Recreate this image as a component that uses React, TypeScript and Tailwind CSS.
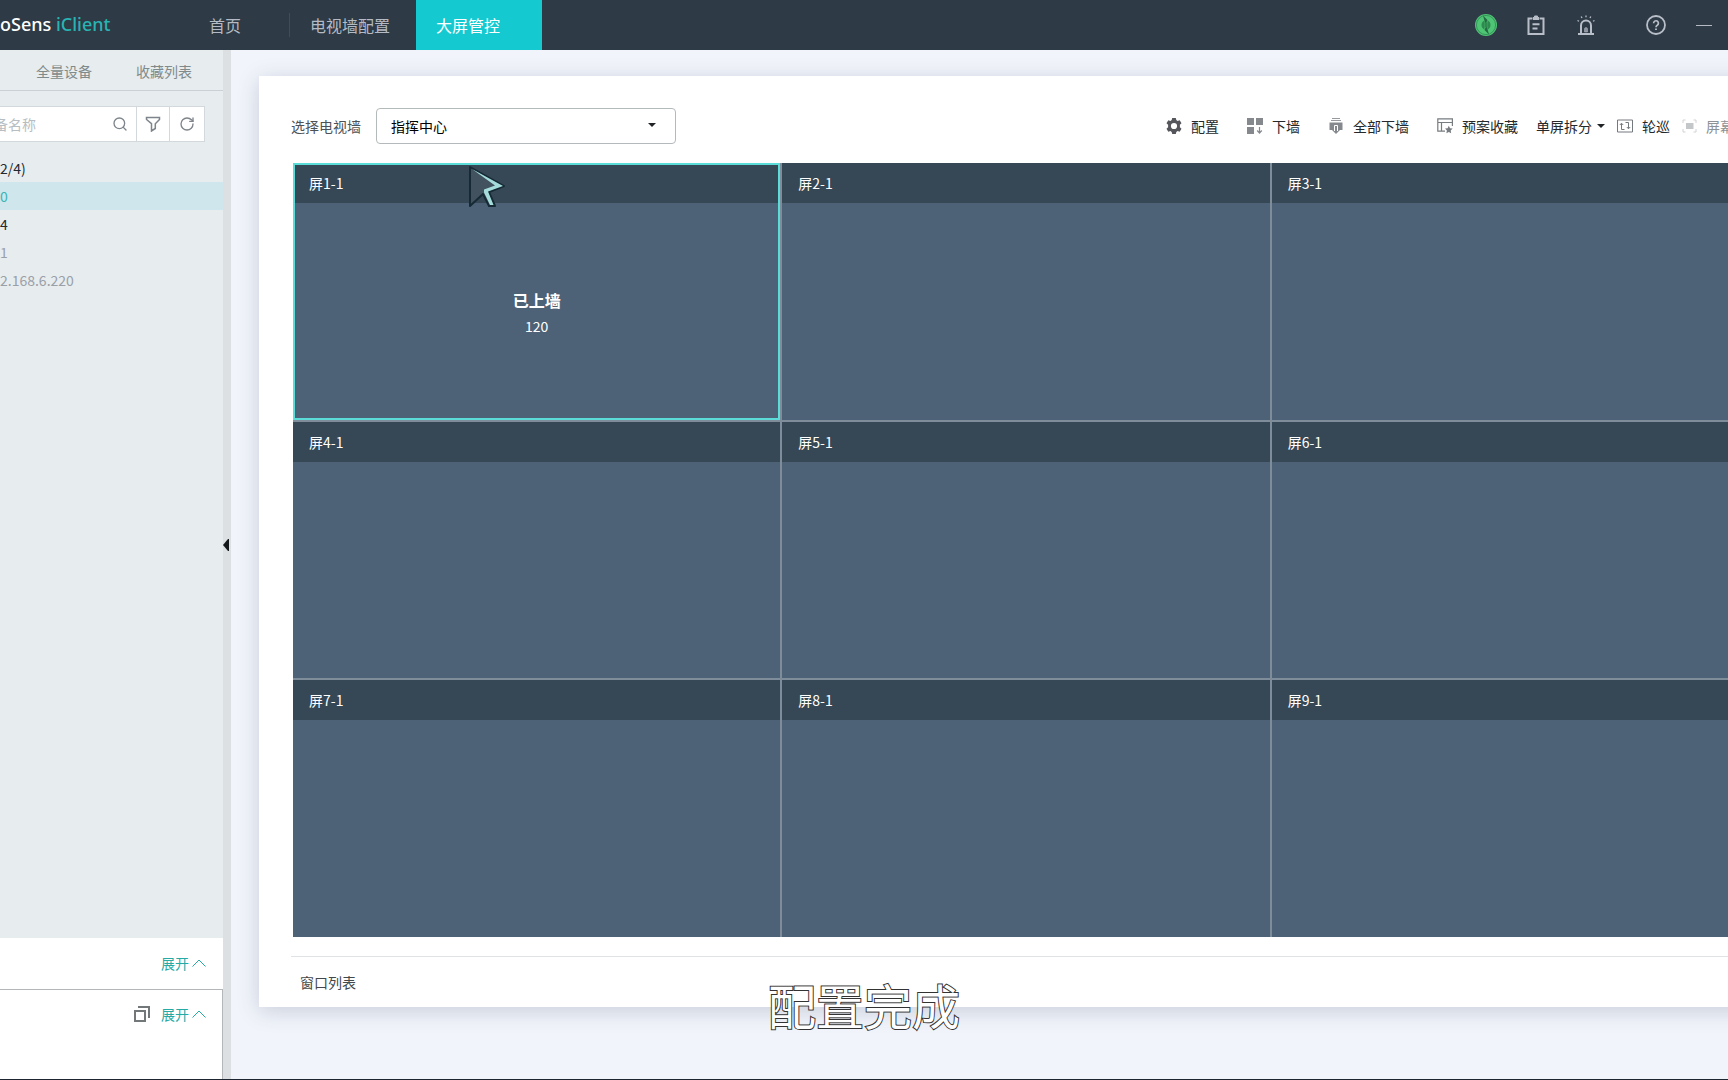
import { useState } from 'react';
import { Search, RotateCw } from 'lucide-react';

const screens = ['屏1-1', '屏2-1', '屏3-1', '屏4-1', '屏5-1', '屏6-1', '屏7-1', '屏8-1', '屏9-1'];

const devices = [
  { name: '2/4)', style: 'text-[#23292f]' },
  { name: '0', style: 'bg-[#cfe6ec] text-[#3bb5b5]' },
  { name: '4', style: 'text-[#23292f]' },
  { name: '1', style: 'text-[#9aa0a8]' },
  { name: '2.168.6.220', style: 'text-[#9aa0a8]' },
];

function SyncIcon() {
  return (
    <svg width="22" height="22" viewBox="0 0 22 22" fill="none">
      <circle cx="11" cy="11" r="11" fill="#4fc475" />
      <circle cx="11" cy="11" r="9.6" stroke="#2f8a52" strokeWidth="0.8" />
      <path d="M8 1.500l4.500 4.500-2 4.500zM14 20.500L9.500 16l2-4.500z" fill="#256a42" />
      <path d="M9.500 6.500C7.500 7 6.500 9 6.500 11s1 4 3 4.500zM12.500 6.500c2 .5 3 2.500 3 4.500s-1 4-3 4.500z" fill="#2f8a50" />
      <path d="M9.500 8.500h3v5h-3z" fill="#2f8a50" />
    </svg>
  );
}

function ClipboardIcon() {
  return (
    <svg width="18" height="20" viewBox="0 0 18 20" fill="none" stroke="#b9bfc9" strokeWidth="2">
      <path d="M5 3.500H1.500V19H16.500V3.500H13" />
      <path d="M6 4.500V2.500h1.500V1h3v1.500H12v2z" fill="#b9bfc9" strokeWidth="1" />
      <path d="M5.500 9.200h7M5.500 13.500h5" />
    </svg>
  );
}

function AlarmIcon() {
  return (
    <svg width="18" height="20" viewBox="0 0 18 20" fill="none" stroke="#b9bfc9" strokeWidth="2">
      <path d="M1 19h16M4 18.500V10.500a5 5 0 0 1 10 0v8" />
      <path d="M7.500 17v-3a1.500 1.500 0 0 1 3 0v3z" fill="#8b939e" strokeWidth="0.5" />
      <path d="M9 .5v1.800M4.200 1.500l.8 1.500M13.800 1.500l-.8 1.500M.5 5.500l1.500.8M17.500 5.500l-1.500.8" strokeWidth="1.300" />
    </svg>
  );
}

function HelpIcon() {
  return (
    <svg width="20" height="20" viewBox="0 0 20 20" fill="none" stroke="#b9bfc9">
      <circle cx="10" cy="10" r="9" strokeWidth="1.800" />
      <path d="M7.600 8.200a2.400 2.400 0 1 1 3.700 2c-.9.600-1.300.9-1.300 2" strokeWidth="1.700" />
      <path d="M10 13.400v1.700" strokeWidth="1.800" />
    </svg>
  );
}

function FilterIcon() {
  return (
    <svg width="16" height="16" viewBox="0 0 16 16" fill="none" stroke="#7d848b" strokeWidth="1.500">
      <path d="M1.500 1.500h13v2l-4.200 4.200v4.800l-3.800 2.500V7.700L1.500 3.500z" />
    </svg>
  );
}

function GearIcon() {
  return (
    <svg width="16" height="16" viewBox="0 0 16 16" fill="#55565b">
      <path
        fillRule="evenodd"
        d="M6.200 0h3.600l.5 2.100 1.300.8 2.100-.7 1.800 3.100-1.600 1.500v2.400l1.600 1.500-1.800 3.100-2.100-.7-1.300.8-.5 2.100H6.200l-.5-2.100-1.300-.8-2.100.7L.5 10.700l1.600-1.500V6.800L.5 5.300l1.800-3.100 2.100.7 1.300-.8zM8 4.900a3.100 3.100 0 1 0 0 6.200 3.100 3.100 0 0 0 0-6.200z"
      />
    </svg>
  );
}

function DownWallIcon() {
  return (
    <svg width="16" height="16" viewBox="0 0 16 16" fill="#85898d">
      <path d="M0 0h7v7H0zM9 0h7v7H9zM0 9h7v7H0z" />
      <path d="M12.500 9v5.800M10.200 12.500l2.300 2.500 2.300-2.500" fill="none" stroke="#85898d" strokeWidth="1.200" />
    </svg>
  );
}

function AllDownIcon() {
  return (
    <svg width="16" height="16" viewBox="0 0 16 16" fill="none">
      <path d="M4 .5h8M3 2.500h10" stroke="#96999d" />
      <path d="M1.500 4.500h13v7.500H12L8 16l-4-4H1.500z" fill="#85898d" />
      <path d="M6.500 13V7.500h3V13" stroke="#fff" />
    </svg>
  );
}

function PlanIcon() {
  return (
    <svg width="16" height="16" viewBox="0 0 16 16" fill="none" stroke="#777c80" strokeWidth="1.200">
      <path d="M15.400 8V.8H.8v12.400H8M.8 4.500h14.600M4.500 4.500v8.700" />
      <path d="M11.800 7.800l1.200 2.400 2.600.4-1.900 1.900.5 2.700-2.400-1.200-2.400 1.200.5-2.700L8 10.600l2.600-.4z" fill="#777c80" stroke="none" />
    </svg>
  );
}

function PatrolIcon() {
  return (
    <svg width="16" height="14" viewBox="0 0 16 14" fill="none" stroke="#74797e">
      <path d="M.5 1h15v12H.5z" />
      <path d="M7.500 10.500h-3v-6M2.800 6l1.700-1.800L6.200 6M8.500 3.500h3v6M9.800 8l1.700 1.800L13.200 8" />
    </svg>
  );
}

function ScreenIcon() {
  return (
    <svg width="15" height="14" viewBox="0 0 15 14" fill="none" stroke="#cfd2d4">
      <path d="M3.500 1H1v3M11.500 1H14v3M3.500 13H1v-3M11.500 13H14v-3" />
      <path d="M4 4h7.500v6H4z" fill="#c3c7ca" stroke="none" />
    </svg>
  );
}

function PointerIcon() {
  return (
    <svg width="40" height="46" viewBox="0 0 40 46" strokeLinejoin="round">
      <path d="M3 4l34 19-15 6 6 14h-6l-6-12L3 43z" fill="#42535f" stroke="#152a35" strokeWidth="2" />
      <path d="M5 6l31 17-15 5.500L26.500 42h-3.500l-6-12.500v-3L28 22.500z" fill="#a5dcdc" />
    </svg>
  );
}

const actions = [
  { label: '配置', icon: GearIcon },
  { label: '下墙', icon: DownWallIcon },
  { label: '全部下墙', icon: AllDownIcon },
  { label: '预案收藏', icon: PlanIcon },
];

function Header() {
  return (
    <header className="flex h-[50px] shrink-0 items-stretch bg-[#2e3a46] text-base text-[#b4bbc4]">
      <h1 className="flex w-[209px] items-center pb-[2px] font-['Noto_Sans'] text-lg font-medium whitespace-pre text-white">
        oSens <span className="text-[#29b3b3]">iClient</span>
      </h1>
      <nav className="flex items-stretch">
        <a href="#home" className="flex w-20 items-center">首页</a>
        <span className="h-6 w-px self-center bg-[#414c57]" />
        <a href="#config" className="flex w-[126px] items-center pl-5">电视墙配置</a>
        <a href="#control" aria-current="page" className="flex w-[126px] items-center bg-[#14cad0] pl-5 text-white">
          大屏管控
        </a>
      </nav>
      <div className="ml-auto flex items-center pr-4">
        <button aria-label="同步"><SyncIcon /></button>
        <button aria-label="任务" className="ml-[30px]"><ClipboardIcon /></button>
        <button aria-label="告警" className="ml-8"><AlarmIcon /></button>
        <button aria-label="帮助" className="ml-[51px]"><HelpIcon /></button>
        <button aria-label="最小化" className="ml-[30px] flex h-5 w-4 items-center">
          <span className="h-px w-full bg-[#b4bbc4]" />
        </button>
      </div>
    </header>
  );
}

function ExpandButton() {
  return (
    <button className="flex items-center gap-[3px] text-[#26aaa6]">
      展开
      <svg width="14" height="8" viewBox="0 0 14 8" fill="none" stroke="#26aaa6">
        <path d="M.5 7.500L7 1l6.500 6.500" />
      </svg>
    </button>
  );
}

function Sidebar() {
  return (
    <aside className="flex w-[231px] shrink-0 border-r-8 border-[#dce0e2] bg-[#e7ecef]">
      <div className="flex min-w-0 flex-1 flex-col">
        <div className="flex h-[41px] shrink-0 items-center gap-11 border-b border-[#c9d1d7] pt-[2px] pl-9 text-[#808a8a]">
          <button>全量设备</button>
          <button>收藏列表</button>
        </div>
        <div className="mt-[15px] mr-[18px] flex h-9 shrink-0 border border-l-0 border-[#d3d8dc] bg-white">
          <input
            aria-label="设备名称"
            placeholder="备名称"
            className="w-0 flex-1 -indent-[6px] outline-none placeholder:text-[#b8bdc2]"
          />
          <button aria-label="搜索" className="w-8 pl-2"><Search className="h-4 w-4 text-[#7d848b]" strokeWidth={2} /></button>
          <button aria-label="筛选" className="flex w-[33px] items-center justify-center border-l border-[#d3d8dc]">
            <FilterIcon />
          </button>
          <button aria-label="刷新" className="flex w-[35px] items-center justify-center border-l border-[#d3d8dc] pr-px">
            <RotateCw className="h-4 w-4 text-[#7d848b]" strokeWidth={2} />
          </button>
        </div>
        <ul className="mt-3">
          {devices.map((device) => (
            <li key={device.name} className={`flex h-7 items-center ${device.style}`}>
              {device.name}
            </li>
          ))}
        </ul>
        <div className="mt-auto flex h-[51px] items-center justify-end bg-white pr-[17px] pb-px">
          <ExpandButton />
        </div>
        <div className="h-[90px] border-t border-r border-[#b3b7b9] bg-white pr-4">
          <div className="flex h-12 items-center justify-end gap-[11px]">
            <button aria-label="弹出">
              <svg width="16" height="16" viewBox="0 0 16 16" fill="none" stroke="#72777a" strokeWidth="2">
                <path d="M1 5h10v10H1zM4 1h11v11" />
              </svg>
            </button>
            <ExpandButton />
          </div>
        </div>
      </div>
      <button aria-label="收起" className="-mr-[6px] self-center pb-10">
        <svg width="6" height="12" viewBox="0 0 6 12" fill="#15181a">
          <path d="M0 6l5-6h1v12H5z" />
        </svg>
      </button>
    </aside>
  );
}

export default function App() {
  const [wall, setWall] = useState('指挥中心');

  return (
    <div className="relative flex h-screen flex-col overflow-hidden border-b border-[#1d2630] bg-[#f1f4fa] font-['Noto_Sans_CJK_SC',sans-serif] text-sm">
      <Header />
      <div className="flex min-h-0 flex-1">
        <Sidebar />
        <main className="flex min-w-0 flex-1 pt-[26px] pb-[72px] pl-7">
          <section className="-mr-16 flex flex-1 flex-col bg-white pr-8 pl-8 shadow-[0_4px_20px_rgba(60,75,110,0.22)]">
            <div className="flex items-center pt-8">
              <label htmlFor="wall" className="mr-[15px] whitespace-nowrap text-[#4c5256]">选择电视墙</label>
              <div className="relative w-[300px]">
                <select
                  id="wall"
                  value={wall}
                  onChange={(e) => setWall(e.target.value)}
                  className="h-9 w-full appearance-none rounded-sm border border-[#b4b9bc] bg-white pl-[14px] text-black"
                >
                  <option>指挥中心</option>
                </select>
                <svg className="pointer-events-none absolute top-[15px] right-5" width="8" height="4" viewBox="0 0 8 4" fill="#202427">
                  <path d="M0 0h8L4 4z" />
                </svg>
              </div>

              <div className="mr-[26px] ml-auto flex items-center whitespace-nowrap text-[#26292b]">
                <div className="flex gap-7">
                  {actions.map((action) => {
                    const Icon = action.icon;
                    return (
                      <button key={action.label} className="flex items-center gap-[9px]">
                        <Icon />
                        {action.label}
                      </button>
                    );
                  })}
                </div>
                <div className="ml-[18px] flex gap-3">
                  <button className="flex items-center gap-[5px]">
                    单屏拆分
                    <svg width="8" height="4" viewBox="0 0 8 4" fill="#202427">
                      <path d="M0 0h8L4 4z" />
                    </svg>
                  </button>
                  <button className="flex items-center gap-[9px]">
                    <PatrolIcon />
                    轮巡
                  </button>
                  <button className="flex items-center gap-[9px] text-[#8d9296]">
                    <ScreenIcon />
                    屏幕
                  </button>
                </div>
              </div>
            </div>

            {/* TV wall */}
            <div className="mt-[19px] mr-px ml-[2px] grid flex-1 grid-cols-3 grid-rows-3 gap-[2px] bg-[#7f8d9b] text-white">
              {screens.map((name, i) => (
                <div key={name} className="relative flex flex-col bg-[#4d6276]">
                  <div className="flex h-10 shrink-0 items-center bg-[#364855] pl-4">{name}</div>
                  {i === 0 && (
                    <>
                      <div className="flex flex-1 flex-col items-center justify-center pt-[2px] text-center">
                        <p className="text-base font-bold">已上墙</p>
                        <p className="mt-1">120</p>
                      </div>
                      <div className="pointer-events-none absolute inset-0 border-2 border-[#5cdcd8]" />
                      <div className="pointer-events-none absolute top-0 left-[174px]">
                        <PointerIcon />
                      </div>
                    </>
                  )}
                </div>
              ))}
            </div>

            <div className="mt-[19px] flex h-[51px] items-center border-t border-[#dfe3e6] pl-[9px] text-[#42484c]">
              窗口列表
            </div>
          </section>
        </main>
      </div>

      {/* Subtitle */}
      <p className="pointer-events-none absolute inset-x-0 bottom-10 text-center text-5xl leading-[70px] text-white [-webkit-text-stroke:2px_#333] [paint-order:stroke]">
        配置完成
      </p>
    </div>
  );
}
